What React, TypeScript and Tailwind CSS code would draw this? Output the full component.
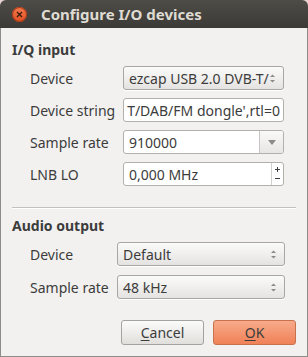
import React from "react";

const font = { fontFamily: '"Noto Sans", "Open Sans", sans-serif' };

function UpDown() {
  return (
    <svg width="7" height="11" viewBox="0 0 7 11" aria-hidden="true">
      <path d="M1 4L3.5 1.5L6 4Z" fill="#8b8a87" />
      <path d="M1 7L3.5 9.5L6 7Z" fill="#8b8a87" />
    </svg>
  );
}

function Combo({ value }: { value: string }) {
  return (
    <div className="flex h-[24px] items-center overflow-hidden rounded-[3px] border border-[#a9a7a3] bg-gradient-to-b from-[#fbfbfa] to-[#e4e3e1] pl-[5px] pr-[7px] shadow-[0_1px_0_#ffffff]">
      <span className="min-w-0 flex-1 overflow-hidden whitespace-nowrap pr-[4px] text-[#3c3c3c]">{value}</span>
      <div className="shrink-0">
        <UpDown />
      </div>
    </div>
  );
}

function Field({ label, children }: { label: string; children: React.ReactNode }) {
  return (
    <>
      <span className="whitespace-nowrap text-[#3c3c3c]">{label}</span>
      {children}
    </>
  );
}

export default function App() {
  return (
    <div
      className="h-[357px] w-[308px] overflow-hidden bg-[#e8d4d3] text-[14px]"
      style={font}
    >
      <div className="flex h-full flex-col overflow-hidden rounded-t-[6px]">
        <div className="flex h-[28px] shrink-0 items-center bg-gradient-to-b from-[#4d4c47] to-[#3b3a36] pl-[12px]">
          <div className="flex h-[15px] w-[15px] items-center justify-center rounded-full bg-gradient-to-b from-[#f57b4e] to-[#de4e1e] shadow-[inset_0_0_0_1px_#a4391a]">
            <svg width="7" height="7" viewBox="0 0 7 7" aria-hidden="true">
              <path d="M1 1L6 6M6 1L1 6" stroke="#3b1d10" strokeWidth="1.4" />
            </svg>
          </div>
          <span className="ml-[14px] text-[15px] font-bold text-[#dfdbd2]">
            Configure I/O devices
          </span>
        </div>

        <div className="flex flex-1 flex-col border-x border-b border-[#8d8c89] bg-[#f2f1f0] px-[11px] pt-[11px]">
          <div className="font-bold text-[#3c3c3c]">I/Q input</div>
          <div className="mt-[6px] grid grid-cols-[93px_161px] items-center gap-y-[8px] pl-[18px]">
            <Field label="Device">
              <Combo value="ezcap USB 2.0 DVB-T/DAB/FM dongle" />
            </Field>
            <Field label="Device string">
              <div className="flex h-[24px] items-center justify-end overflow-hidden rounded-[3px] border border-[#b3b0ab] bg-white pr-[3px] text-[#3c3c3c]">
                <span className="whitespace-nowrap">T/DAB/FM dongle',rtl=0</span>
              </div>
            </Field>
            <Field label="Sample rate">
              <div className="flex h-[24px] items-stretch overflow-hidden rounded-[3px] border border-[#b3b0ab] bg-white">
                <span className="flex flex-1 items-center pl-[5px] text-[#3c3c3c]">910000</span>
                <div className="flex w-[24px] items-center justify-center border-l border-[#c7c5c1] bg-gradient-to-b from-[#f9f9f8] to-[#e7e6e4]">
                  <svg width="8" height="5" viewBox="0 0 8 5" aria-hidden="true">
                    <path d="M0 0H8L4 5Z" fill="#8b8a87" />
                  </svg>
                </div>
              </div>
            </Field>
            <Field label="LNB LO">
              <div className="flex h-[24px] items-stretch overflow-hidden rounded-[3px] border border-[#b3b0ab] bg-white">
                <span className="flex flex-1 items-center pl-[5px] text-[#3c3c3c]">0,000 MHz</span>
                <div className="flex w-[12px] flex-col items-center justify-around border-l border-[#d3d1cd] py-[2px]">
                  <svg width="5" height="5" viewBox="0 0 5 5" aria-hidden="true">
                    <path d="M0 2.5H5M2.5 0V5" stroke="#3c3c3c" strokeWidth="1" />
                  </svg>
                  <svg width="5" height="5" viewBox="0 0 5 5" aria-hidden="true">
                    <path d="M0 2.5H5" stroke="#3c3c3c" strokeWidth="1" />
                  </svg>
                </div>
              </div>
            </Field>
          </div>

          <div className="mt-[21px] h-[2px] border-t border-b border-t-[#c3c1bd] border-b-white" />

          <div className="mt-[6px] font-bold text-[#3c3c3c]">Audio output</div>
          <div className="mt-[6px] grid grid-cols-[87px_168px] items-center gap-y-[9px] pl-[18px]">
            <Field label="Device">
              <Combo value="Default" />
            </Field>
            <Field label="Sample rate">
              <Combo value="48 kHz" />
            </Field>
          </div>

          <div className="mt-[21px] flex justify-end gap-[9px]">
            <button className="flex h-[25px] w-[83px] items-center justify-center rounded-[3px] border border-[#a4a29e] bg-gradient-to-b from-[#fbfbfa] to-[#e0dfdc] text-[#3c3c3c]">
              <span><span className="underline underline-offset-2">C</span>ancel</span>
            </button>
            <button className="flex h-[25px] w-[83px] items-center justify-center rounded-[3px] border border-[#c8714d] bg-gradient-to-b from-[#f7aa8a] to-[#ef8156] text-[#3c3c3c]">
              <span><span className="underline underline-offset-2">O</span>K</span>
            </button>
          </div>
        </div>
      </div>
    </div>
  );
}
